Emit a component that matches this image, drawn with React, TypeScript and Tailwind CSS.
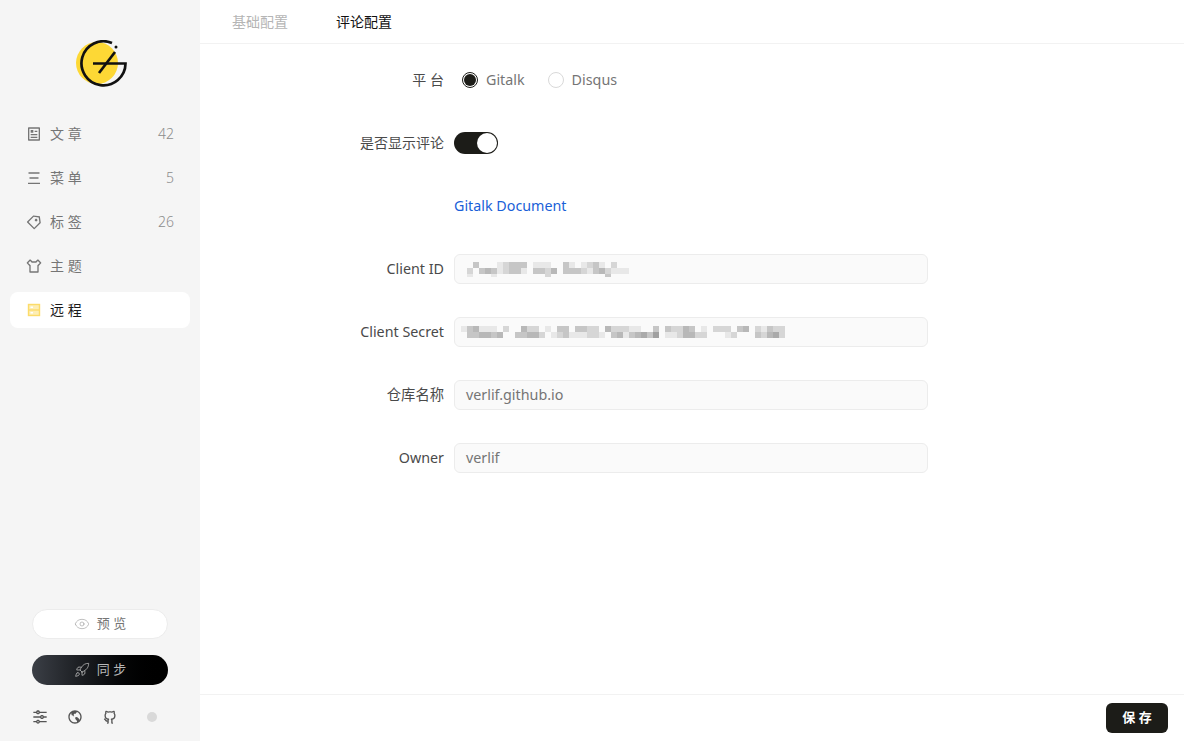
import type { ReactNode } from "react";
import { Eye, Rocket } from "lucide-react";
import {
  RiArticleLine,
  RiEarthLine,
  RiEqualizerLine,
  RiGithubLine,
  RiPriceTag3Line,
  RiTShirtLine,
} from "react-icons/ri";

const font = "font-['Noto_Sans','Noto_Sans_CJK_SC',sans-serif]";

function MenuIcon() {
  return (
    <svg width="16" height="16" viewBox="0 0 16 16" fill="none" stroke="currentColor" strokeWidth="1.3">
      <path d="M2.5 3h11M3.5 8h9M2 13.3h12" />
    </svg>
  );
}

function RemoteIcon() {
  return (
    <svg width="16" height="16" viewBox="0 0 16 16" fill="#fdeeb5" stroke="#fcdc6a" strokeWidth="1.4">
      <rect x="2.5" y="2.5" width="11" height="11" />
      <path d="M2.5 8h11" />
      <path d="M4.5 5.2h2.5M4.5 10.8h2.5" stroke="#fff" />
    </svg>
  );
}

function Logo() {
  return (
    <svg width="54" height="48" viewBox="74 40 54 48" fill="none">
      <circle cx="97" cy="63" r="21" fill="#fdd835" />
      <path d="M112 43A22 22 0 1 0 125.5 63.5H93" stroke="#111" strokeWidth="2.7" />
      <path d="M115 52L99 73" stroke="#111" strokeWidth="2.7" />
      <circle cx="116" cy="47" r="1.5" fill="#111" />
    </svg>
  );
}

const navItems = [
  { label: "文 章", count: "42", icon: <RiArticleLine size={16} /> },
  { label: "菜 单", count: "5", icon: <MenuIcon /> },
  { label: "标 签", count: "26", icon: <RiPriceTag3Line size={16} /> },
  { label: "主 题", count: "", icon: <RiTShirtLine size={16} /> },
];

const shades: Record<string, string> = {
  "9": "#a0a0a0",
  a: "#aaaaaa",
  b: "#b8b8b8",
  c: "#c6c6c6",
  d: "#d6d6d6",
  e: "#e8e8e8",
  f: "transparent",
};

// pixelated values, one hex shade per 6px cell
const clientIdRows = [
  "ffcfffedcccfeeeffcefedcefdff",
  "fdfcbcedccefccdbfcccdecbdeee",
  "fefffeffffffffdfffffffffcfff",
];
const clientSecretRows = [
  "ecbeeefdffbddfefccfccddfbdddeeffcfcddbcfefdddfcbfdecdd",
  "fccbbcbffccbbdfedceeeddefcbecbac9feedbbddfffedfffcdbad",
];

function Mosaic({ rows }: { rows: string[] }) {
  return (
    <div className="-ml-[5.33px] flex flex-col">
      {rows.map((row, y) => (
        <div key={y} className={y === 2 ? "flex h-[3px]" : "flex h-[6px]"}>
          {row.split("").map((cell, x) => (
            <span key={x} className="block h-full w-[6px]" style={{ backgroundColor: shades[cell] }} />
          ))}
        </div>
      ))}
    </div>
  );
}

function Field({ label, value, mosaic }: { label: string; value?: string; mosaic?: ReactNode }) {
  return (
    <div className="flex h-[30px] items-center">
      <label className="w-[254px] pr-[10px] text-right text-[14.3px] text-[#4a4a4a]">{label}</label>
      <div className="flex h-[30px] w-[474px] items-center rounded-md border border-[#ececec] bg-[#fafafa] px-[11px] text-[14.3px] text-[#757575]">
        {value ?? mosaic}
      </div>
    </div>
  );
}

export default function App() {
  return (
    <div className={`flex h-[741px] w-[1184px] overflow-hidden bg-white ${font}`}>
      <aside className="flex w-[200px] flex-col bg-[#f5f5f5] px-[10px]">
        <div className="mt-[40px] flex justify-center pl-[2px]">
          <Logo />
        </div>
        <nav className="mt-[28px] flex flex-col gap-[8px]">
          {navItems.map((item) => (
            <div key={item.label} className="flex h-[36px] items-center justify-between pl-[16px] pr-[16px] text-sm text-[#757575]">
              <div className="flex items-center gap-[8px]">
                {item.icon}
                <span>{item.label}</span>
              </div>
              <span className="text-sm font-light text-[#8c8c8c]">{item.count}</span>
            </div>
          ))}
          <div className="flex h-[36px] items-center gap-[8px] rounded-lg bg-white pl-[16px] text-sm text-[#1a1a1a]">
            <RemoteIcon />
            <span>远 程</span>
          </div>
        </nav>
        <div className="mt-auto flex flex-col items-center">
          <button className="flex h-[30px] w-[136px] items-center justify-center gap-[7px] rounded-full border border-[#ececec] bg-white text-[13px] text-[#757575]">
            <Eye size={16} strokeWidth={1} className="text-[#a0a0a0]" />
            <span>预 览</span>
          </button>
          <button className="mt-[16px] flex h-[30px] w-[136px] items-center justify-center gap-[7px] rounded-full bg-gradient-to-r from-[#3b3f46] to-black text-[13px] text-[#b8b8b8]">
            <Rocket size={16} strokeWidth={1.2} />
            <span>同 步</span>
          </button>
          <div className="mt-[24px] mb-[16px] flex w-[136px] items-center gap-[19px] text-[#555]">
            <RiEqualizerLine size={16} />
            <RiEarthLine size={16} />
            <RiGithubLine size={16} />
            <span className="ml-[10px] h-[10px] w-[10px] rounded-full bg-[#d9d9d9]" />
          </div>
        </div>
      </aside>

      <main className="flex flex-1 flex-col">
        <div className="flex h-[44px] items-center gap-[48px] border-b border-[#f2f2f2] pl-[32px] text-sm">
          <span className="text-[#b5b5b5]">基础配置</span>
          <span className="text-[#111]">评论配置</span>
        </div>
        <div className="flex flex-1 flex-col pt-[21px]">
          <div className="flex h-[30px] items-center">
            <label className="w-[254px] pr-[10px] text-right text-sm text-[#4a4a4a]">平 台</label>
            <div className="ml-[8px] flex items-center gap-[8px] text-[14.3px] text-[#757575]">
              <span className="flex h-[16px] w-[16px] items-center justify-center rounded-full border border-[#1c1c18]">
                <span className="h-[12px] w-[12px] rounded-full bg-[#1c1c18]" />
              </span>
              <span>Gitalk</span>
              <span className="ml-[15px] h-[16px] w-[16px] rounded-full border border-[#d9d9d9] bg-white" />
              <span>Disqus</span>
            </div>
          </div>
          <div className="mt-[33px] flex h-[30px] items-center">
            <label className="w-[254px] pr-[10px] text-right text-sm text-[#4a4a4a]">是否显示评论</label>
            <span className="flex h-[22px] w-[44px] items-center justify-end rounded-full bg-[#1c1c18] pr-[1px]">
              <span className="h-[20px] w-[20px] rounded-full bg-white" />
            </span>
          </div>
          <div className="mt-[33px] flex h-[30px] items-center pl-[254px]">
            <a className="text-[14.3px] text-[#1a5fd8]">Gitalk Document</a>
          </div>
          <div className="mt-[33px] flex flex-col gap-[33px]">
            <Field label="Client ID" mosaic={<Mosaic rows={clientIdRows} />} />
            <Field label="Client Secret" mosaic={<Mosaic rows={clientSecretRows} />} />
            <Field label="仓库名称" value="verlif.github.io" />
            <Field label="Owner" value="verlif" />
          </div>
        </div>
        <div className="flex h-[47px] items-center justify-end border-t border-[#f2f2f2] pr-[16px]">
          <button className="h-[30px] w-[62px] rounded-md bg-[#1c1c18] text-[13px] font-bold text-white">保 存</button>
        </div>
      </main>
    </div>
  );
}
